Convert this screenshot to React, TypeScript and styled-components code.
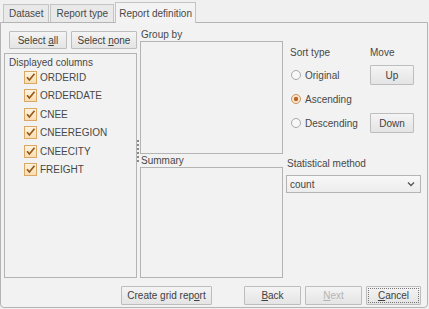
import React from "react";
import styled, { createGlobalStyle } from "styled-components";

const GlobalStyle = createGlobalStyle`
  html, body {
    margin: 0;
    padding: 0;
    background: #f0f0f0;
  }
  body {
    font-family: "Liberation Sans", Arial, sans-serif;
    font-size: 10px;
    color: #484848;
  }
`;

const Window = styled.div`
  width: 429px;
  height: 309px;
  background: #f0f0f0;
  overflow: hidden;
  box-sizing: border-box;
`;

const TabBar = styled.div`
  display: flex;
  align-items: flex-end;
  height: 22px;
  padding-left: 3px;
  gap: 1px;
`;

const Tab = styled.div<{ $active?: boolean }>`
  box-sizing: border-box;
  height: ${(p) => (p.$active ? 21 : 18)}px;
  padding: 0 ${(p) => (p.$active ? 3 : 5)}px;
  display: flex;
  align-items: center;
  border: 1px solid #c4c4c4;
  border-bottom: none;
  background: ${(p) => (p.$active ? "#f3f3f3" : "#e9e9e9")};
  margin-bottom: ${(p) => (p.$active ? -1 : 0)}px;
  position: relative;
  z-index: ${(p) => (p.$active ? 1 : 0)};
`;

const Panel = styled.div`
  box-sizing: border-box;
  width: 428px;
  height: 286px;
  border: 1px solid #b4b4b4;
  border-radius: 0 0 4px 4px;
  background: #f2f2f2;
  display: grid;
  grid-template-columns: 133px 3px 143px 1fr;
  grid-template-rows: 255px 1fr;
  padding-left: 3px;
`;

const LeftCol = styled.div`
  display: flex;
  flex-direction: column;
  padding-top: 8px;
`;

const ButtonRow = styled.div`
  display: flex;
  gap: 4px;
  padding-left: 5px;
  margin-bottom: 4px;
`;

const Button = styled.button<{ $w: number; $h?: number; $disabled?: boolean; $focus?: boolean }>`
  box-sizing: border-box;
  width: ${(p) => p.$w}px;
  height: ${(p) => p.$h ?? 18}px;
  padding: 0;
  font-family: "Liberation Sans", Arial, sans-serif;
  font-size: 10px;
  color: ${(p) => (p.$disabled ? "#b4b4b4" : "#404040")};
  background: linear-gradient(#f4f4f4, #e4e4e4);
  border: 1px solid #bdbdbd;
  border-radius: 1px;
  display: flex;
  align-items: center;
  justify-content: center;
  outline: ${(p) => (p.$focus ? "1px dotted #777" : "none")};
  outline-offset: -3px;
  u {
    text-decoration: underline;
  }
`;

const ListBox = styled.div`
  box-sizing: border-box;
  height: 226px;
  border: 1px solid #b4b4b4;
  padding: 2px 4px;
`;

const ListTitle = styled.div`
  height: 13px;
  line-height: 13px;
  margin-bottom: -1px;
`;

const CheckRow = styled.div`
  display: flex;
  align-items: center;
  gap: 3px;
  height: 18.5px;
  padding-left: 15px;
`;

const Splitter = styled.div`
  display: flex;
  flex-direction: column;
  align-items: flex-start;
  gap: 2px;
  padding-top: 117px;
`;

const Dot = styled.span`
  width: 2px;
  height: 2px;
  background: #8a8a8a;
`;

const MiddleCol = styled.div`
  display: flex;
  flex-direction: column;
  padding-top: 6px;
`;

const BoxLabel = styled.div<{ $gap?: number }>`
  height: 12px;
  line-height: 12px;
  padding-left: 1px;
  margin-top: ${(p) => p.$gap ?? 0}px;
`;

const FieldBox = styled.div<{ $h: number }>`
  box-sizing: border-box;
  height: ${(p) => p.$h}px;
  border: 1px solid #b4b4b4;
`;

const RightCol = styled.div`
  display: grid;
  grid-template-columns: 83px 1fr;
  grid-template-rows: 22px 24px 24px 24px;
  padding: 18px 0 0 4px;
  align-content: start;
  align-items: center;
`;

const Label = styled.div<{ $pl?: number }>`
  padding-left: ${(p) => p.$pl ?? 0}px;
`;

const Radio = styled.div`
  display: flex;
  align-items: center;
  gap: 4px;
  padding-left: 4px;
`;

const StatBlock = styled.div`
  grid-column: 1 / 3;
  display: flex;
  flex-direction: column;
  gap: 6px;
  margin-top: 23px;
`;

const Select = styled.div`
  box-sizing: border-box;
  width: 135px;
  height: 18px;
  border: 1px solid #b4b4b4;
  background: linear-gradient(#f8f8f8, #ececec);
  display: flex;
  align-items: center;
  justify-content: space-between;
  padding: 0 5px 0 3px;
  margin-left: -1px;
`;

const Footer = styled.div`
  grid-column: 1 / 5;
  display: flex;
  align-items: flex-start;
  padding-top: 8px;
  padding-left: 117px;
`;

const FooterRight = styled.div`
  display: flex;
  gap: 4px;
  margin-left: 32px;
`;

const CheckIcon = () => (
  <svg width="13" height="13" viewBox="0 0 13 13">
    <defs>
      <linearGradient id="cb" x1="0" y1="0" x2="0" y2="1">
        <stop offset="0" stopColor="#fff5e4" />
        <stop offset="1" stopColor="#f9dcae" />
      </linearGradient>
    </defs>
    <rect x="0.5" y="0.5" width="12" height="12" fill="url(#cb)" stroke="#dba764" />
    <path d="M3 6.2 L5.4 9 L10.5 2.8" fill="none" stroke="#93581c" strokeWidth="1.7" />
  </svg>
);

const RadioIcon = ({ on }: { on?: boolean }) => (
  <svg width="10" height="10" viewBox="0 0 10 10">
    <circle cx="5" cy="5" r="4.5" fill={on ? "#fbe6cc" : "#f7f7f7"} stroke={on ? "#c9935a" : "#a8a8a8"} />
    {on && <circle cx="5" cy="5" r="2.2" fill="#b8662a" />}
  </svg>
);

const Chevron = () => (
  <svg width="8" height="6" viewBox="0 0 8 6">
    <path d="M1 1.5 L4 4.5 L7 1.5" fill="none" stroke="#555" strokeWidth="1.3" />
  </svg>
);

const columns = ["ORDERID", "ORDERDATE", "CNEE", "CNEEREGION", "CNEECITY", "FREIGHT"];

export default function App() {
  return (
    <Window>
      <GlobalStyle />
      <TabBar>
        <Tab>Dataset</Tab>
        <Tab>Report type</Tab>
        <Tab $active>Report definition</Tab>
      </TabBar>
      <Panel>
        <LeftCol>
          <ButtonRow>
            <Button $w={58}>
              Select&nbsp;<u>a</u>ll
            </Button>
            <Button $w={66}>
              Select&nbsp;<u>n</u>one
            </Button>
          </ButtonRow>
          <ListBox>
            <ListTitle>Displayed columns</ListTitle>
            {columns.map((c) => (
              <CheckRow key={c}>
                <CheckIcon />
                {c}
              </CheckRow>
            ))}
          </ListBox>
        </LeftCol>
        <Splitter>
          {Array.from({ length: 6 }).map((_, i) => (
            <Dot key={i} />
          ))}
        </Splitter>
        <MiddleCol>
          <BoxLabel>Group by</BoxLabel>
          <FieldBox $h={113} />
          <BoxLabel $gap={1}>Summary</BoxLabel>
          <FieldBox $h={112} />
        </MiddleCol>
        <RightCol>
          <Label $pl={3}>Sort type</Label>
          <Label>Move</Label>
          <Radio>
            <RadioIcon />
            Original
          </Radio>
          <Button $w={44} $h={20}>Up</Button>
          <Radio>
            <RadioIcon on />
            Ascending
          </Radio>
          <span />
          <Radio>
            <RadioIcon />
            Descending
          </Radio>
          <Button $w={44} $h={20}>Down</Button>
          <StatBlock>
            <Label>Statistical method</Label>
            <Select>
              count
              <Chevron />
            </Select>
          </StatBlock>
        </RightCol>
        <Footer>
          <Button $w={91} $h={19}>
            Create grid rep<u>o</u>rt
          </Button>
          <FooterRight>
            <Button $w={57} $h={19}>
              <u>B</u>ack
            </Button>
            <Button $w={57} $h={19} $disabled>
              <u>N</u>ext
            </Button>
            <Button $w={55} $h={19} $focus>
              <u>C</u>ancel
            </Button>
          </FooterRight>
        </Footer>
      </Panel>
    </Window>
  );
}
